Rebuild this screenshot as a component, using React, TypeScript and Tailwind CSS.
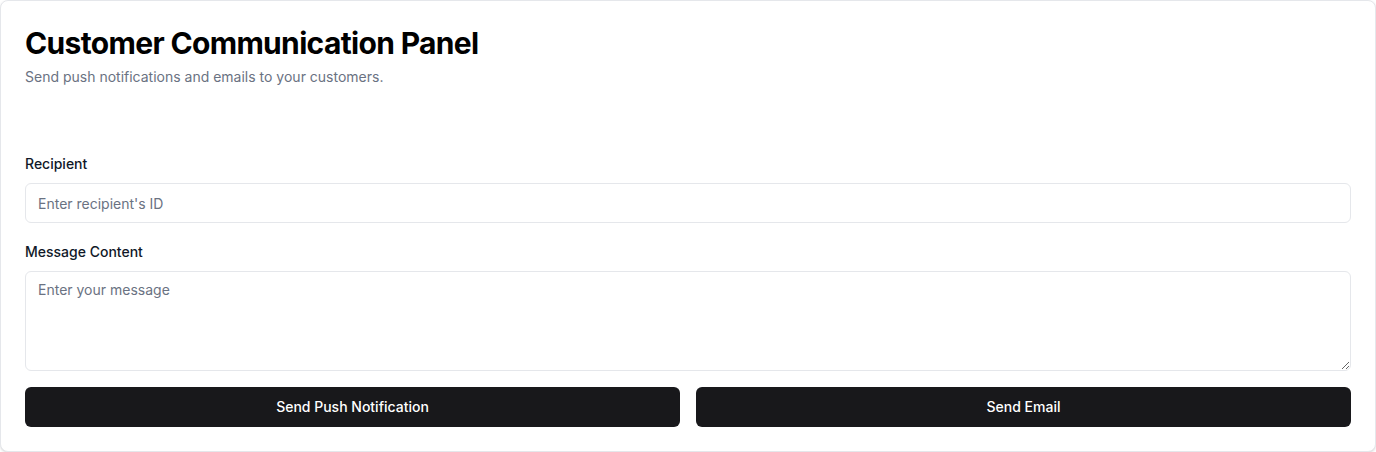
import React, { useState } from 'react';

const App: React.FC = () => {
  const [recipient, setRecipient] = useState('');
  const [message, setMessage] = useState('');

  return (
    <div className="w-[1376px] h-[452px] bg-white font-['Inter',sans-serif]">
      <div className="h-full rounded-lg border border-gray-200 bg-white p-6 shadow-sm">
        <div className="flex flex-col">
          <h1 className="text-3xl font-bold tracking-[-0.022em] text-black">Customer Communication Panel</h1>
          <p className="mt-1.5 text-sm text-gray-500">Send push notifications and emails to your customers.</p>
        </div>
        <form className="mt-[67px]" onSubmit={e => e.preventDefault()}>
          <label className="block text-sm font-medium text-gray-900">Recipient</label>
          <input
            type="text"
            value={recipient}
            onChange={e => setRecipient(e.target.value)}
            placeholder="Enter recipient's ID"
            className="mt-[9px] block h-10 w-full rounded-md border border-gray-200 bg-white px-3 text-sm text-gray-900 placeholder-gray-500 focus:outline-none"
          />
          <label className="mt-[19px] block text-sm font-medium text-gray-900">Message Content</label>
          <textarea
            value={message}
            onChange={e => setMessage(e.target.value)}
            placeholder="Enter your message"
            className="mt-[9px] block h-[100px] w-full rounded-md border border-gray-200 bg-white px-3 py-2 text-sm text-gray-900 placeholder-gray-500 focus:outline-none"
          />
          <div className="mt-4 flex gap-4">
            <button type="button" className="h-10 flex-1 rounded-md bg-[#18181b] text-sm font-medium text-white">Send Push Notification</button>
            <button type="button" className="h-10 flex-1 rounded-md bg-[#18181b] text-sm font-medium text-white">Send Email</button>
          </div>
        </form>
      </div>
    </div>
  );
};

export default App;
